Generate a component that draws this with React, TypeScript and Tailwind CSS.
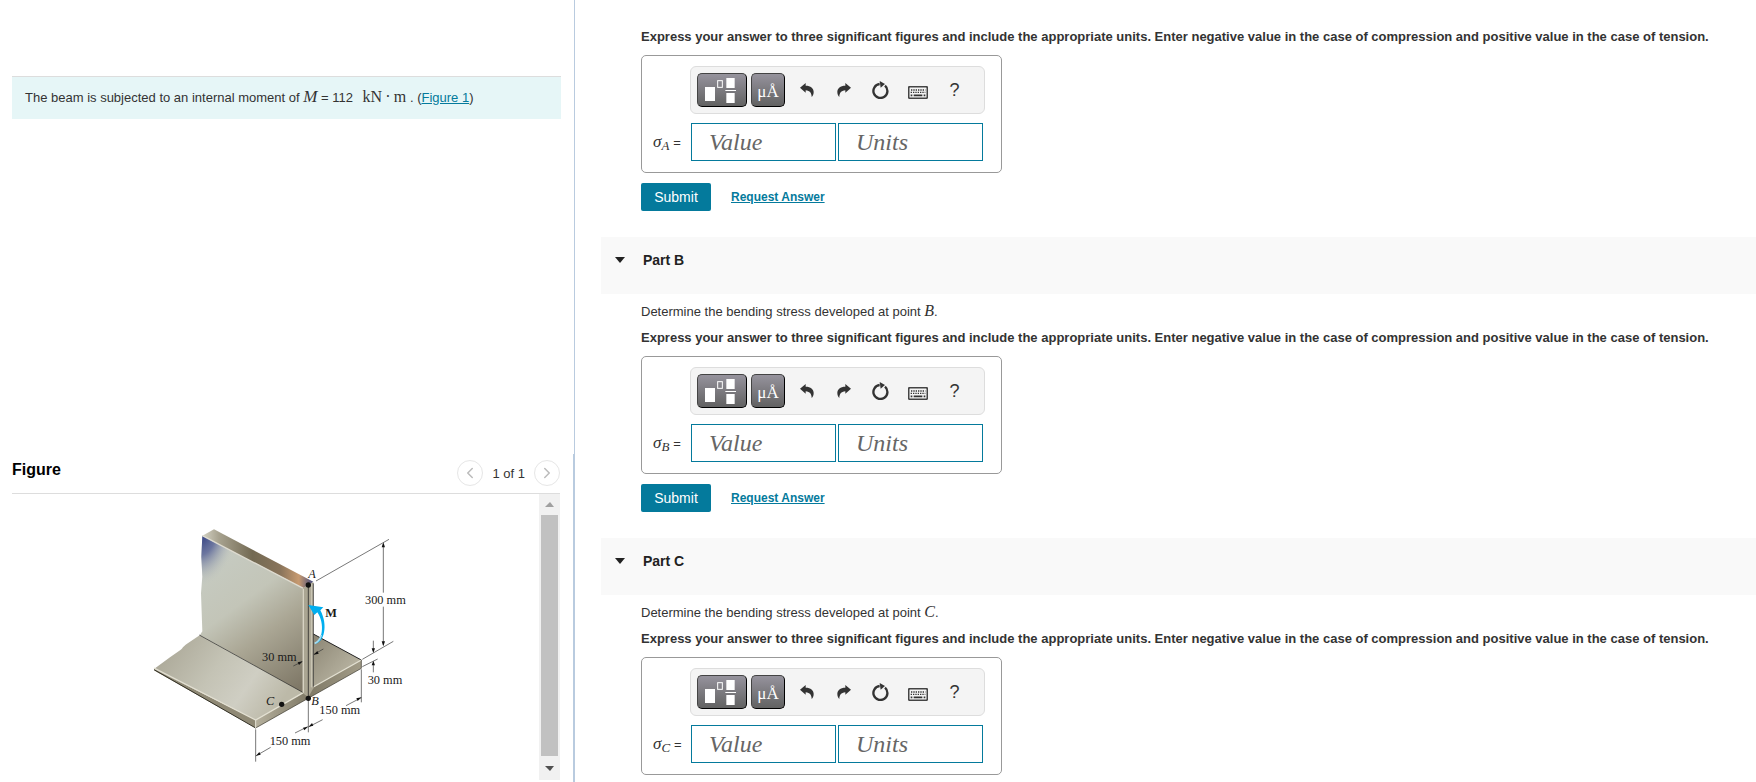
import { useState } from 'react';
import { ChevronLeft, ChevronRight } from 'lucide-react';

interface Part {
  id: string;
  heading?: string;
  showActions: boolean;
}

const parts: Part[] = [
  { id: 'A', showActions: true },
  { id: 'B', heading: 'Part B', showActions: true },
  { id: 'C', heading: 'Part C', showActions: false },
];

const UndoIcon = () => (
  <svg width="14" height="14" viewBox="0 0 42 42" fill="#333">
    <path d="M0 14 L17 0 V8 C32 8 41 16 41 27 C41 33 39 38 35 42 C35 31 30 23 17 22 V29 Z" />
  </svg>
);

const RedoIcon = () => (
  <svg width="14" height="14" viewBox="0 0 42 42" fill="#333">
    <path d="M42 14 L25 0 V8 C10 8 1 16 1 27 C1 33 3 38 7 42 C7 31 12 23 25 22 V29 Z" />
  </svg>
);

const ResetIcon = () => (
  <svg width="18" height="18" viewBox="0 0 54 54">
    <path d="M39 14 A21 21 0 1 1 23 9" fill="none" stroke="#333" strokeWidth="7" />
    <path d="M23 0 L39 9 L26 20 Z" fill="#333" />
  </svg>
);

const KeyboardIcon = () => (
  <svg width="20" height="13" viewBox="0 0 60 39">
    <rect x="2" y="2" width="56" height="35" rx="4" fill="#f4f4f4" stroke="#444" strokeWidth="5" />
    <path d="M9 12 H52 M8 19 H52" stroke="#333" strokeWidth="4" strokeDasharray="4 3" />
    <path d="M8 28 H13 M17 28 H43 M47 28 H52" stroke="#333" strokeWidth="5" />
  </svg>
);

const TemplateIcon = () => (
  <svg width="31" height="25" viewBox="0 0 93 75">
    <rect x="0" y="27" width="30" height="42" fill="#fff" />
    <rect x="38" y="8" width="14" height="20" fill="none" stroke="#fff" strokeWidth="3" />
    <rect x="64" y="0" width="25" height="30" fill="#fff" />
    <rect x="61" y="36" width="32" height="3" fill="#fff" />
    <rect x="64" y="45" width="25" height="30" fill="#fff" />
  </svg>
);

const BeamFigure = () => (
  <svg width="290" height="270" viewBox="0 0 870 810" role="img" aria-label="Inverted T beam with an internal moment M">
    <defs>
      <linearGradient id="web" gradientUnits="userSpaceOnUse" x1="200" y1="180" x2="480" y2="560">
        <stop offset="0" stopColor="#c6cbc2" />
        <stop offset="0.35" stopColor="#c3c5b8" />
        <stop offset="0.6" stopColor="#aaa694" />
        <stop offset="1" stopColor="#7f7867" />
      </linearGradient>
      <radialGradient id="corner" gradientUnits="userSpaceOnUse" cx="0" cy="0" r="1" gradientTransform="translate(187 100) rotate(10) scale(105 165)">
        <stop offset="0" stopColor="#2f3d80" />
        <stop offset="0.4" stopColor="#5c6799" stopOpacity="0.85" />
        <stop offset="1" stopColor="#c6cbc2" stopOpacity="0" />
      </radialGradient>
      <linearGradient id="webTop" x1="0" y1="0" x2="1" y2="0">
        <stop offset="0" stopColor="#d4d2c4" />
        <stop offset="0.15" stopColor="#a7a28f" />
        <stop offset="0.45" stopColor="#736a53" />
        <stop offset="0.7" stopColor="#88735a" />
        <stop offset="0.87" stopColor="#c79a70" />
        <stop offset="1" stopColor="#444a7d" />
      </linearGradient>
      <linearGradient id="flange" gradientUnits="userSpaceOnUse" x1="100" y1="430" x2="400" y2="640">
        <stop offset="0" stopColor="#aeab9b" />
        <stop offset="0.4" stopColor="#c4c3b5" />
        <stop offset="0.7" stopColor="#cfcec3" />
        <stop offset="1" stopColor="#bcb9a8" />
      </linearGradient>
      <linearGradient id="flangeRight" x1="0" y1="0" x2="1" y2="1">
        <stop offset="0" stopColor="#8b8573" />
        <stop offset="1" stopColor="#c6c2b0" />
      </linearGradient>
      <linearGradient id="endFace" x1="0" y1="0" x2="1" y2="0">
        <stop offset="0" stopColor="#b5b09d" />
        <stop offset="0.5" stopColor="#7f7966" />
        <stop offset="1" stopColor="#a29c88" />
      </linearGradient>
    </defs>

    {/* flange */}
    <path d="M180 405 L140 432 C128 440 128 446 118 452 L90 472 L42 507 L347 660 L492 577 Z" fill="url(#flange)" />
    <path d="M42 507 L347 660 V684 L44 512 Z" fill="#8f8975" />
    <path d="M42 509 L347 684" stroke="#333126" strokeWidth="3" />
    <path d="M520 402 L664 480 L520 562 Z" fill="url(#flangeRight)" />
    <path d="M520 402 L664 480" stroke="#222" strokeWidth="3" />
    <path d="M347 660 L490 578 L520 560 L664 480 V505 L347 684 Z" fill="url(#endFace)" />
    <path d="M42 504 L347 660 L490 578 M520 561 L664 480" fill="none" stroke="#e3e0d2" strokeWidth="4" />
    <path d="M347 684 L664 505 V480" fill="none" stroke="#333126" strokeWidth="2" />
    <path d="M347 660 V684" stroke="#e3e0d2" strokeWidth="3" />

    {/* web */}
    <path d="M187 107 L490 265 V578 L180 405 L187 394 L183 280 L187 230 L184 170 Z" fill="url(#web)" />
    <path d="M187 107 L490 265 V578 L180 405 L187 394 L183 280 L187 230 L184 170 Z" fill="url(#corner)" />
    <path d="M178 405 L490 578" stroke="#222" strokeWidth="2" />
    <path d="M187 107 L222 88 L520 245 L490 265 Z" fill="url(#webTop)" />
    <path d="M187 107 L490 265" stroke="#dedbd0" strokeWidth="4" />
    <path d="M488 265 L520 246 V565 L505 592 L488 579 Z" fill="#aaa592" />
    <path d="M490 266 V578" stroke="#d7d3c3" strokeWidth="4" />
    <path d="M515 252 V562" stroke="#c9c5b4" strokeWidth="5" />
    <path d="M505 255 V595 M520 250 V560" stroke="#111" strokeWidth="2" />

    {/* dimension lines */}
    <g stroke="#333" strokeWidth="2" fill="none">
      <path d="M528 243 L747 118 M730 132 V278 M730 320 V434 M667 478 L760 424 M667 500 L713 477" />
      <path d="M700 422 V454 M700 488 V517 M664 508 V607 M664 593 L618 617 M548 659 L505 681" />
      <path d="M505 598 V697 M503 680 L465 699 M392 742 L347 768 M347 688 V785" />
      <path d="M460 498 L486 485 M550 447 L522 463" />
    </g>
    <g fill="#111">
      <path d="M730 127 l-5 15 h10 Z" />
      <path d="M730 439 l-5 -15 h10 Z" />
      <path d="M700 459 l-5 -14 h10 Z" />
      <path d="M700 482 l-5 14 h10 Z" />
      <path d="M664 592 l-15 3 l4 8 Z" />
      <path d="M506 680 l10 -11 l4 8 Z" />
      <path d="M504 680 l-15 3 l4 8 Z" />
      <path d="M348 767 l10 -11 l4 8 Z" />
      <path d="M488 484 l-15 3 l4 8 Z" />
      <path d="M521 464 l11 -11 l4 8 Z" />
      <circle cx="505" cy="255" r="8" />
      <circle cx="505" cy="595" r="8" />
      <circle cx="425" cy="613" r="8" />
    </g>

    {/* moment arrow */}
    <path d="M523 432 C547 424 556 372 532 337 L523 345 L505 315 L550 322 L541 331 C565 375 553 430 523 432 Z" fill="#00aeef" />
    <path d="M524 430 C534 427 540 418 544 405" fill="none" stroke="#a5dcf2" strokeWidth="5" />

    <g className="font-['Liberation_Serif',serif]" fontSize="37" fill="#1a1a1a">
      <text x="675" y="311">300 mm</text>
      <text x="366" y="483">30 mm</text>
      <text x="683" y="552">30 mm</text>
      <text x="538" y="642">150 mm</text>
      <text x="389" y="734">150 mm</text>
      <text x="505" y="233" fontStyle="italic">A</text>
      <text x="514" y="614" fontStyle="italic">B</text>
      <text x="378" y="615" fontStyle="italic">C</text>
      <text x="556" y="350" fontWeight="bold">M</text>
    </g>
  </svg>
);

const AnswerBox = ({ id }: { id: string }) => {
  const [value, setValue] = useState('');
  const [units, setUnits] = useState('');

  const darkButton = 'flex h-[34px] items-center justify-center rounded-[5px] border border-t-[#444] border-l-[#444] border-r-black border-b-black bg-linear-to-b from-[#96939d] to-[#626262]';
  const iconButton = 'flex h-[34px] w-[37px] items-center justify-center';
  const field = "h-[38px] w-[145px] border border-[#047a9c] bg-white pl-[17px] font-['Liberation_Serif',serif] text-2xl italic text-[#333] outline-none placeholder:text-[#666]";

  return (
    <div className="flex h-[118px] w-[361px] max-w-full flex-col gap-[9px] rounded-[5px] border border-[#999] pt-[10px]">
      <div className="ml-12 flex h-12 w-[295px] items-center rounded-md border border-[#ddd] bg-[#f4f4f4] pl-[6px]">
        <button aria-label="Templates" className={`${darkButton} mr-1 w-[50px] pr-1`}>
          <TemplateIcon />
        </button>
        <button aria-label="Symbols" className={`${darkButton} mr-[3px] w-[34px] pt-1 font-['Liberation_Serif',serif] text-[17px] text-white`}>
          μÅ
        </button>
        <button aria-label="Undo" className={iconButton}><UndoIcon /></button>
        <button aria-label="Redo" className={iconButton}><RedoIcon /></button>
        <button aria-label="Reset" className={iconButton}><ResetIcon /></button>
        <button aria-label="Keyboard shortcuts" className={`${iconButton} pt-1`}><KeyboardIcon /></button>
        <button aria-label="Help" className={`${iconButton} text-lg text-[#333]`}>?</button>
      </div>
      <div className="flex items-center">
        <label htmlFor={`value-${id}`} className="flex w-[49px] items-baseline gap-1 pl-[11px] text-[13px] text-[#333]">
          <span className="font-['Liberation_Serif',serif] text-[17px] leading-5 italic">
            σ<sub className="-bottom-[3px] text-[13px]">{id}</sub>
          </span>
          =
        </label>
        <div className="flex gap-0.5">
          <input id={`value-${id}`} className={field} placeholder="Value" value={value} onChange={(e) => setValue(e.target.value)} />
          <input aria-label="Units" className={field} placeholder="Units" value={units} onChange={(e) => setUnits(e.target.value)} />
        </div>
      </div>
    </div>
  );
};

const PartSection = ({ part }: { part: Part }) => (
  <section>
    {part.heading && (
      <header className="h-[57px] bg-[#f9f9f9] pt-[13px] pl-[14px]">
        <button className="flex items-center gap-[18px] text-sm font-bold text-[#222]">
          <svg width="10" height="6" viewBox="0 0 10 6"><path d="M0 0 H10 L5 6 Z" fill="#222" /></svg>
          {part.heading}
        </button>
      </header>
    )}
    <div className={part.heading ? 'pt-2 pl-10' : 'pt-[27px] pl-10'}>
      {part.heading && (
        <p className="mb-1.5 h-5 text-[13px] leading-5">
          Determine the bending stress developed at point{' '}
          <span className="font-['Liberation_Serif',serif] text-base leading-none italic">{part.id}</span>.
        </p>
      )}
      <p className="mb-2 text-[13px] leading-5 font-bold">
        Express your answer to three significant figures and include the appropriate units. Enter negative value in the case of compression and positive value in the case of tension.
      </p>
      <AnswerBox id={part.id} />
      {part.showActions && (
        <div className="mt-[10px] mb-[26px] flex items-center gap-5">
          <button className="h-7 w-[70px] rounded-xs bg-[#047a9c] text-sm text-white">Submit</button>
          <a href="#" className="text-xs font-bold text-[#047a9c] underline">Request Answer</a>
        </div>
      )}
    </div>
  </section>
);

export default function App() {
  return (
    <div className="flex min-h-screen bg-white font-['Liberation_Sans',Arial,sans-serif] text-[#333]">
      <aside className="flex w-[575px] shrink-0 flex-col">
        <div className="flex-1 border-r border-[#b9cbdf] pt-[76px] pr-[13px] pl-3">
          <p className="h-[43px] border-t border-[#ddd] bg-[#e6f6f7] px-[13px] text-[13px] leading-[42px]">
            The beam is subjected to an internal moment of{' '}
            <span className="font-['Liberation_Serif',serif] text-[17px] leading-none italic">M</span> = 112{' '}
            <span className="ml-1.5 font-['Liberation_Serif',serif] text-base leading-none">kN{'\u2009'}·{'\u2009'}m</span> . (
            <a href="#figure" className="text-[#047a9c] underline">Figure 1</a>)
          </p>
        </div>

        <section id="figure" className="border-r-2 border-[#b9cbdf] pr-[13px] pl-3">
          <header className="flex h-10 items-start justify-between border-b border-[#ddd]">
            <h2 className="mt-1 text-base font-bold text-black">Figure</h2>
            <div className="mt-1.5 flex items-center gap-[9px] text-[13px]">
              <button aria-label="Previous figure" className="flex size-[26px] items-center justify-center rounded-full border border-[#e6e6e6] text-[#bbb]">
                <ChevronLeft size={18} />
              </button>
              <span className="pt-0.5">1 of 1</span>
              <button aria-label="Next figure" className="flex size-[26px] items-center justify-center rounded-full border border-[#e6e6e6] text-[#bbb]">
                <ChevronRight size={18} />
              </button>
            </div>
          </header>
          <div className="mb-0.5 flex h-[286px] justify-between">
            <div className="pt-1.5 pl-32">
              <BeamFigure />
            </div>
            <div className="flex w-[21px] flex-col items-center bg-[#f1f1f1]">
              <button aria-label="Scroll up" className="flex h-[21px] w-full items-center justify-center">
                <svg width="9" height="5" viewBox="0 0 9 5"><path d="M0 5 H9 L5 0 Z" fill="#a0a0a0" /></svg>
              </button>
              <div className="w-[17px] flex-1 bg-[#c1c1c1]" />
              <button aria-label="Scroll down" className="flex h-6 w-full items-center justify-center">
                <svg width="9" height="5" viewBox="0 0 9 5"><path d="M0 0 H9 L5 5 Z" fill="#505050" /></svg>
              </button>
            </div>
          </div>
        </section>
      </aside>

      <main className="min-w-0 flex-1 pl-[26px]">
        {parts.map((part) => (
          <PartSection key={part.id} part={part} />
        ))}
      </main>
    </div>
  );
}
